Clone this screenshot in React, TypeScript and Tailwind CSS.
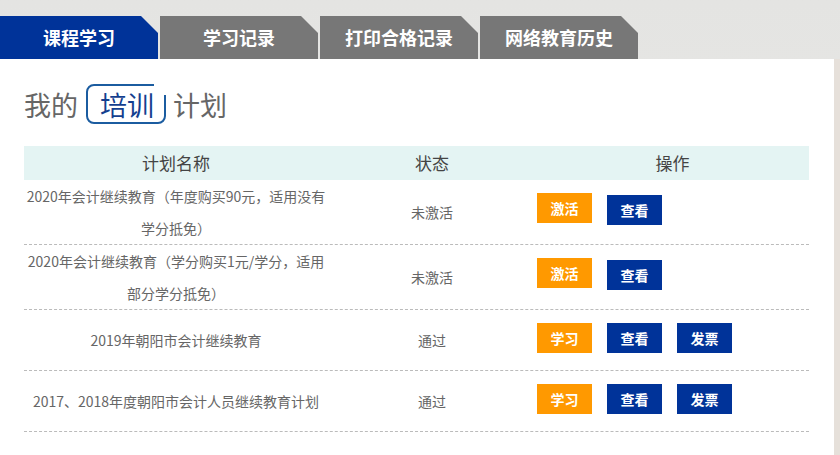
import React from "react";

const font = { fontFamily: '"Noto Sans CJK SC", "Noto Sans", sans-serif' };

const tabs = ["课程学习", "学习记录", "打印合格记录", "网络教育历史"];

type Row = {
  name: React.ReactNode;
  status: string;
  tall: boolean;
  first: string;
  invoice: boolean;
};

const rows: Row[] = [
  {
    name: (
      <>
        2020年会计继续教育（年度购买90元，适用没有
        <br />
        学分抵免）
      </>
    ),
    status: "未激活",
    tall: true,
    first: "激活",
    invoice: false,
  },
  {
    name: (
      <>
        2020年会计继续教育（学分购买1元/学分，适用
        <br />
        部分学分抵免）
      </>
    ),
    status: "未激活",
    tall: true,
    first: "激活",
    invoice: false,
  },
  {
    name: <>2019年朝阳市会计继续教育</>,
    status: "通过",
    tall: false,
    first: "学习",
    invoice: true,
  },
  {
    name: <>2017、2018年度朝阳市会计人员继续教育计划</>,
    status: "通过",
    tall: false,
    first: "学习",
    invoice: true,
  },
];

export default function App() {
  return (
    <div
      className="w-[840px] h-[455px] overflow-hidden bg-gradient-to-b from-[#e4e4e2] to-[#ecebe9] flex flex-col"
      style={font}
    >
      {/* Tabs */}
      <div className="flex gap-[2px] mt-[16px] h-[43px] shrink-0">
        {tabs.map((t, i) => (
          <div
            key={t}
            className={`w-[158px] h-full flex items-center justify-center text-white font-bold text-[18px] [clip-path:polygon(0_0,calc(100%-17px)_0,100%_17px,100%_100%,0_100%)] ${
              i === 0 ? "bg-[#003399]" : "bg-[#777777]"
            }`}
          >
            {t}
          </div>
        ))}
      </div>

      {/* Panel */}
      <div className="flex flex-1">
        <div className="w-[834px] bg-white pl-[24px] pt-[25px]">
          {/* Title */}
          <div className="flex items-center h-[40px] text-[27px] text-[#666666] leading-none">
            <span>我的</span>
            <span className="relative ml-[8px] h-[40px] border-2 border-[#1b5ca0] rounded-[8px] pl-[12px] pr-[10px] flex items-center text-[#143f8f]">
              培训
              <span className="absolute -top-[2px] -right-[2px] w-[12px] h-[11px] bg-white"></span>
            </span>
            <span className="ml-[7px]">计划</span>
          </div>

          {/* Table */}
          <div className="w-[785px] mt-[22px] text-[14px] text-[#666666]">
            <div className="grid grid-cols-[304px_208px_1fr] h-[34px] bg-[#e4f4f3] text-[17px] text-[#444444] items-center text-center">
              <div>计划名称</div>
              <div>状态</div>
              <div>操作</div>
            </div>
            {rows.map((r, idx) => (
              <div
                key={idx}
                className={`grid grid-cols-[304px_208px_1fr] border-b border-dashed border-[#bbbbbb] ${
                  r.tall ? "h-[65px]" : "h-[61px]"
                }`}
              >
                <div className="flex items-center justify-center text-center leading-[32px]">
                  <div>{r.name}</div>
                </div>
                <div className="flex items-center justify-center">{r.status}</div>
                <div className="flex items-start gap-[15px] pl-[1px] pt-[13px]">
                  <span className="w-[55px] h-[30px] leading-[30px] text-center bg-[#ff9900] text-white font-bold">
                    {r.first}
                  </span>
                  <span
                    className={`w-[55px] h-[30px] leading-[30px] text-center bg-[#003399] text-white font-bold ${
                      r.tall ? "mt-[2px]" : ""
                    }`}
                  >
                    查看
                  </span>
                  {r.invoice && (
                    <span className="w-[55px] h-[30px] leading-[30px] text-center bg-[#003399] text-white font-bold">
                      发票
                    </span>
                  )}
                </div>
              </div>
            ))}
          </div>
        </div>
        <div className="flex-1 bg-[#e6e0da]"></div>
      </div>
    </div>
  );
}
